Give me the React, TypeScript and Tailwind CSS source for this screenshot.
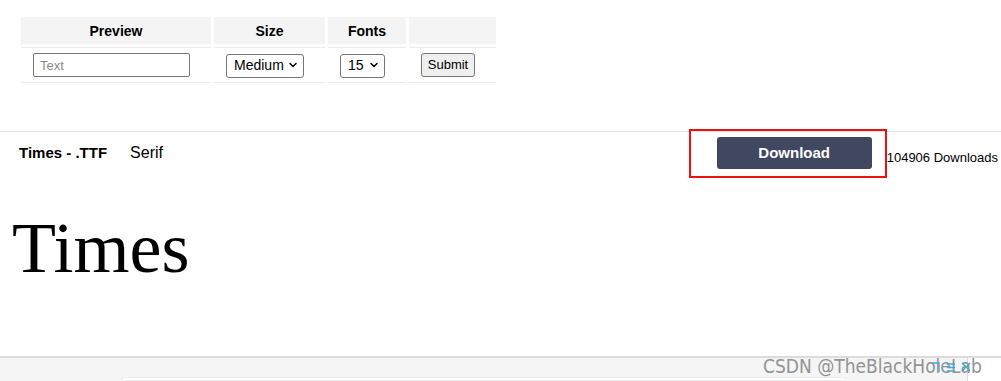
import { ChevronDown } from "lucide-react";

const sans = "font-['Liberation_Sans',Arial,sans-serif]";

function Picker({ value, width }: { value: string; width: string }) {
  return (
    <div className={`relative ${width} h-[24px]`}>
      <select
        defaultValue={value}
        className="appearance-none w-full h-full border border-[#767676] rounded-[3px] bg-white pl-[7px] text-[14px] text-black outline-none"
      >
        <option>{value}</option>
      </select>
      <ChevronDown
        size={12}
        strokeWidth={3}
        className="absolute right-[5px] top-1/2 -translate-y-1/2 pointer-events-none text-black"
      />
    </div>
  );
}

export default function App() {
  return (
    <div className={`relative w-[1001px] h-[381px] overflow-hidden bg-white flex flex-col text-black ${sans}`}>
      {/* settings table */}
      <div className="h-[131px] shrink-0 pt-[17px] pl-[21px]">
        <div className="grid grid-cols-[190px_111px_78px_87px] gap-x-[3px] gap-y-[3px]">
          {["Preview", "Size", "Fonts", ""].map((h, i) => (
            <div
              key={i}
              className="h-[27px] pt-[2px] bg-[#f4f4f4] flex items-center justify-center text-[14px] font-bold"
            >
              {h}
            </div>
          ))}
          <div className="h-[36px] border-y border-[#ececec] flex items-center pl-[12px]">
            <input
              placeholder="Text"
              className="w-[157px] h-[24px] border border-[#767676] rounded-[2px] px-[6px] text-[13px] placeholder:text-[#8a8a8a] outline-none"
            />
          </div>
          <div className="h-[36px] border-y border-[#ececec] flex items-center pl-[12px]">
            <Picker value="Medium" width="w-[78px]" />
          </div>
          <div className="h-[36px] border-y border-[#ececec] flex items-center pl-[12px]">
            <Picker value="15" width="w-[45px]" />
          </div>
          <div className="h-[36px] border-y border-[#ececec] flex items-center pl-[12px]">
            <button className="w-[54px] h-[24px] border border-[#767676] rounded-[3px] bg-[#efefef] text-[13px]">
              Submit
            </button>
          </div>
        </div>
      </div>

      {/* font entry */}
      <div className="h-[225px] shrink-0 border-t border-[#e4e4e4]">
        <div className="h-[48px] flex items-start">
          <div className="pl-[19px] pt-[12px] text-[15px] font-bold leading-[18px]">Times - .TTF</div>
          <div className="pl-[23px] pt-[12px] text-[16px] leading-[18px]">Serif</div>
          <div className="ml-auto flex items-start pr-[3px]">
            <div className="-mt-[3px] w-[198px] h-[49px] border-2 border-[#ec1010] pl-[26px] pt-[6px]">
              <button className="w-[155px] h-[32px] pt-[1px] rounded-[3px] bg-[#404760] text-white text-[15px] font-bold">
                Download
              </button>
            </div>
            <div className="pt-[18px] text-[13px] leading-[16px]">104906 Downloads</div>
          </div>
        </div>
        <div className="mt-[32px] pl-[12px] font-['Liberation_Serif','Times_New_Roman',serif] text-[72px] leading-none">
          Times
        </div>
      </div>

      {/* page bottom */}
      <div className="flex-1 border-t-2 border-[#dcdcdc] bg-[#f5f5f5] flex">
        <div className="w-[121px]" />
        <div className="w-[725px] mt-[19px] bg-white border border-[#ececec] rounded-t-[3px]" />
        <div className="flex-1" />
        <div className="w-[34px] bg-white border-l border-[#dddddd]" />
      </div>

      {/* watermark */}
      <div className="absolute left-[763px] top-[355px] text-[19px] leading-[22px] text-[#939393] font-['DejaVu_Sans_Condensed','Liberation_Sans',sans-serif]">
        CSDN @TheBlackHoleLab
      </div>
      <svg className="absolute left-[930px] top-[360px]" width="44" height="14" viewBox="0 0 44 14" fill="none" stroke="#3fa9d9" strokeWidth="1.3">
        <path d="M2 3h7v9" />
        <path d="M17 4h8M17 7.5h8M17 11h8" />
        <path d="M32 3l8 8M40 3l-8 8" />
      </svg>
    </div>
  );
}
